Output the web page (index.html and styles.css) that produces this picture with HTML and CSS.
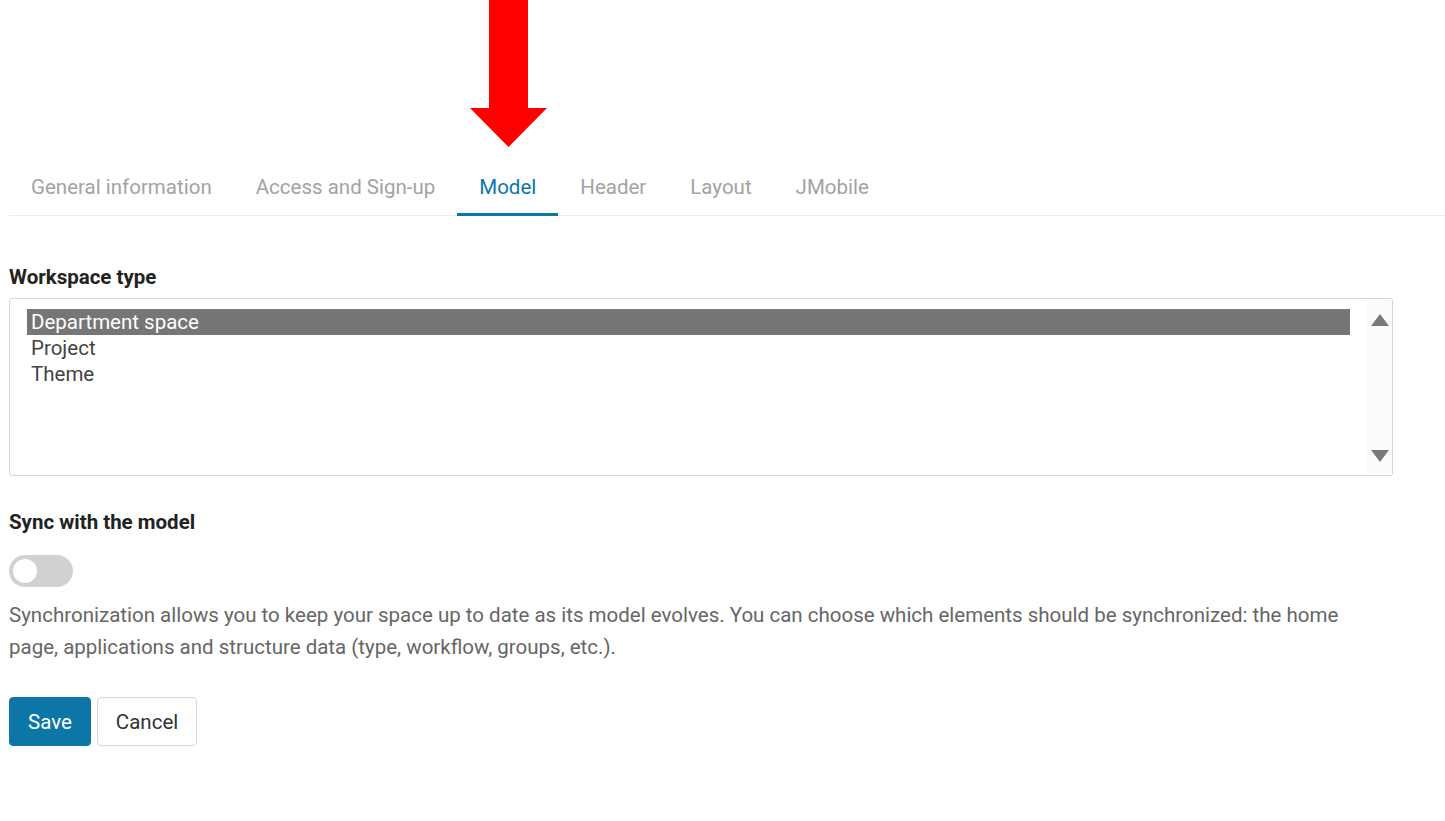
FILE: index.html
```html
<!DOCTYPE html>
<html lang="en">
<head>
    <meta charset="UTF-8">
    <meta name="viewport" content="width=device-width, initial-scale=1.0">
    <title>Workspace settings - Model</title>
    <link rel="stylesheet" href="styles.css">
</head>
<body>
    <div class="pointer">
        <svg width="78" height="148" viewBox="0 0 78 148">
            <polygon points="19,0 58,0 58,108 77,108 38.5,147 0,108 19,108" fill="#ff0000"/>
        </svg>
    </div>

    <nav class="tabs">
        <a class="tab">General information</a>
        <a class="tab">Access and Sign-up</a>
        <a class="tab active">Model</a>
        <a class="tab">Header</a>
        <a class="tab">Layout</a>
        <a class="tab">JMobile</a>
    </nav>

    <section class="field">
        <h3 class="field-label">Workspace type</h3>
        <div class="listbox">
            <ul class="options">
                <li class="option selected">Department space</li>
                <li class="option">Project</li>
                <li class="option">Theme</li>
            </ul>
            <div class="scroll">
                <span class="arrow up"></span>
                <span class="arrow down"></span>
            </div>
        </div>
    </section>

    <section class="field sync">
        <h3 class="field-label">Sync with the model</h3>
        <div class="toggle"><span class="knob"></span></div>
        <p class="help">Synchronization allows you to keep your space up to date as its model evolves. You can choose which elements should be synchronized: the home page, applications and structure data (type, workflow, groups, etc.).</p>
    </section>

    <div class="actions">
        <button class="btn primary">Save</button>
        <button class="btn">Cancel</button>
    </div>
</body>
</html>
```

FILE: styles.css
```css
:root {
    --blue: #0c77a7;
    --grey-text: #a3a3a3;
    --border: #d6d6d6;
}

body {
    font-family: Roboto, 'Liberation Sans', sans-serif;
    color: #333;
    background: #fff;
    margin: 0;
    padding: 0 0 0 9px;
}

.pointer {
    height: 148px;
    padding-left: 461px;
}

.pointer svg {
    display: block;
}

.tabs {
    display: flex;
    border-bottom: 1px solid #ececec;
    height: 68px;
    box-sizing: border-box;
}

.tab {
    padding: 27px 22px 0;
    font-size: 20.5px;
    line-height: 24px;
    color: var(--grey-text);
    border-bottom: 3px solid transparent;
    margin-bottom: -1px;
    cursor: pointer;
}

.tab.active {
    color: var(--blue);
    border-bottom-color: var(--blue);
}

.field-label {
    font-size: 20.5px;
    line-height: 24px;
    font-weight: bold;
    color: #222;
    margin: 49px 0 9px;
}

.listbox {
    display: flex;
    width: 1384px;
    height: 178px;
    box-sizing: border-box;
    border: 1px solid var(--border);
    border-radius: 3px;
}

.options {
    list-style: none;
    flex: 1;
    margin: 0;
    padding: 10px 17px 0 17px;
}

.option {
    height: 26px;
    line-height: 26px;
    font-size: 20.5px;
    padding-left: 4px;
    color: #444;
}

.option.selected {
    background: #767676;
    color: #fff;
}

.scroll {
    width: 25px;
    background: #fbfbfb;
    display: flex;
    flex-direction: column;
    justify-content: space-between;
    align-items: center;
    padding: 15px 0 13px;
}

.arrow {
    width: 0;
    height: 0;
    border-left: 9px solid transparent;
    border-right: 9px solid transparent;
}

.arrow.up {
    border-bottom: 12px solid #7a7a7a;
}

.arrow.down {
    border-top: 12px solid #7a7a7a;
}

.sync .field-label {
    margin-top: 34px;
    margin-bottom: 21px;
}

.toggle {
    width: 64px;
    height: 32px;
    border-radius: 16px;
    background: #d1d1d1;
    position: relative;
}

.knob {
    position: absolute;
    left: 4px;
    top: 4px;
    width: 24px;
    height: 24px;
    border-radius: 50%;
    background: #fff;
}

.help {
    font-size: 20.5px;
    line-height: 32px;
    color: #666;
    margin: 12px 0 0;
    max-width: 1360px;
}

.actions {
    display: flex;
    gap: 6px;
    margin-top: 34px;
}

.btn {
    font-family: Roboto, 'Liberation Sans', sans-serif;
    font-size: 20.5px;
    height: 49px;
    padding: 0 18px;
    border: 1px solid var(--border);
    border-radius: 4px;
    background: #fff;
    color: #333;
    cursor: pointer;
}

.btn.primary {
    background: var(--blue);
    border-color: var(--blue);
    color: #fff;
}
```
